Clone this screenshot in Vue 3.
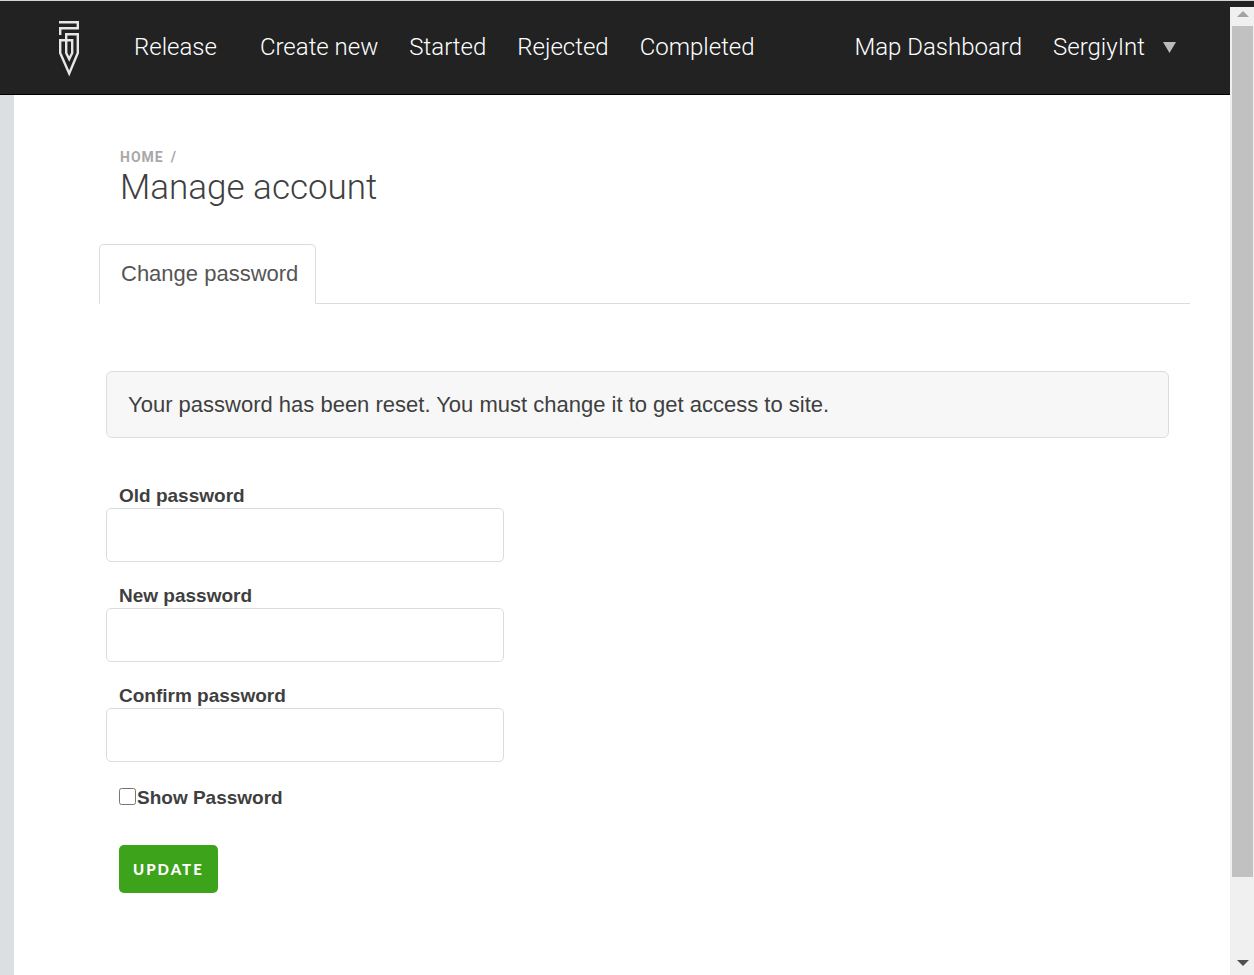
<script setup>
import { ref } from 'vue'

const links = ['Release', 'Create new', 'Started', 'Rejected', 'Completed']
const fields = [
  { id: 'old-password', label: 'Old password' },
  { id: 'new-password', label: 'New password' },
  { id: 'confirm-password', label: 'Confirm password' }
]
const values = ref({})
const show = ref(false)
</script>

<template>
  <div class="page">
    <header class="topbar">
      <a class="logo" href="#" aria-label="Home">
        <svg width="20" height="56" viewBox="0 0 20 56" fill="none" stroke="#e6e6e6" stroke-width="2.4">
          <path d="M0 1.2H18.8V7.2H1.2V14" />
          <path d="M18.8 13.3H7.2V32L10.2 38L13.2 32V19.2H1.2V32L10.2 52.5L18.8 32Z" />
        </svg>
      </a>
      <nav class="links">
        <a v-for="l in links" :key="l" href="#">{{ l }}</a>
      </nav>
      <nav class="account">
        <a href="#">Map Dashboard</a>
        <button type="button" class="user">
          SergiyInt
          <svg width="13" height="11" viewBox="0 0 13 11"><path d="M0 0H13L6.5 11Z" fill="#bbb" /></svg>
        </button>
      </nav>
    </header>

    <main class="content">
      <div class="heading">
        <div class="crumbs"><a href="#">HOME</a><span>/</span></div>
        <h1>Manage account</h1>
      </div>

      <div class="tabs" role="tablist">
        <button type="button" class="tab" role="tab" aria-selected="true">Change password</button>
      </div>

      <div class="panel">
        <p class="notice">Your password has been reset. You must change it to get access to site.</p>

        <form @submit.prevent>
          <div v-for="f in fields" :key="f.id" class="field">
            <label :for="f.id">{{ f.label }}</label>
            <input :id="f.id" v-model="values[f.id]" :type="show ? 'text' : 'password'" />
          </div>
          <div class="show">
            <input id="show-password" v-model="show" type="checkbox" />
            <label for="show-password">Show Password</label>
          </div>
          <button type="submit" class="update">UPDATE</button>
        </form>
      </div>
    </main>

    <div class="scrollbar" aria-hidden="true">
      <svg class="arrow" width="12" height="6" viewBox="0 0 12 6"><path d="M0 6L6 0L12 6Z" fill="#a3a3a3" /></svg>
      <div class="track"><div class="thumb"></div></div>
      <svg class="arrow" width="12" height="6" viewBox="0 0 12 6"><path d="M0 0H12L6 6Z" fill="#505050" /></svg>
    </div>
  </div>
</template>

<style>
body {
  margin: 0;
}
</style>

<style scoped>
* {
  box-sizing: border-box;
}
.page {
  position: relative;
  display: flex;
  flex-direction: column;
  min-height: 100vh;
  background: #fff;
  color: #3f3f3f;
  font-family: "Liberation Sans", Arial, sans-serif;
}
.topbar {
  display: flex;
  align-items: center;
  height: 95px;
  padding: 0 78px 2px 59px;
  background: #222;
  border-top: 1px solid #d2d7d6;
  border-bottom: 1px solid #000;
  font: 300 24px/32px Roboto, sans-serif;
}
.topbar a {
  color: #fff;
  text-decoration: none;
}
.logo {
  display: flex;
  margin-right: 55px;
  padding-top: 4px;
}
.links,
.account {
  display: flex;
  align-items: center;
  gap: 31px;
  white-space: nowrap;
}
.links a:first-child {
  margin-right: 12px;
}
.account {
  margin-left: auto;
}
.user {
  display: flex;
  align-items: center;
  gap: 18px;
  padding: 0;
  border: 0;
  background: none;
  color: #fff;
  font: inherit;
}
.user svg {
  margin-top: 2px;
}
.content {
  flex: 1;
  padding: 54px 64px 40px 85px;
  border-left: 14px solid #dbdfe2;
}
.heading {
  padding-left: 21px;
}
.crumbs {
  display: flex;
  gap: 7px;
  color: #a8a8a8;
  font: 700 14px/16px Roboto, sans-serif;
  letter-spacing: 1px;
}
.crumbs a {
  color: inherit;
  text-decoration: none;
}
h1 {
  margin: 0;
  font: 300 35px/46px Roboto, sans-serif;
}
.tabs {
  display: flex;
  margin-top: 33px;
  border-bottom: 1px solid #dcdcdc;
}
.tab {
  height: 60px;
  margin-bottom: -1px;
  padding: 0 17px 0 21px;
  border: 1px solid #dcdcdc;
  border-bottom-color: #fff;
  border-radius: 5px 5px 0 0;
  background: #fff;
  color: #555;
  font: 22px/28px "Liberation Sans", Arial, sans-serif;
}
.panel {
  padding: 67px 21px 0 7px;
}
.notice {
  margin: 0 0 46px;
  padding: 18px 21px;
  border: 1px solid #dadde0;
  border-radius: 6px;
  background: #f7f7f7;
  font-size: 22px;
  line-height: 29px;
}
.field {
  display: flex;
  flex-direction: column;
  margin-bottom: 22px;
}
label {
  font-size: 19px;
  font-weight: 700;
  line-height: 24px;
}
.field label {
  padding-left: 13px;
}
.field input {
  width: 100%;
  max-width: 398px;
  height: 54px;
  padding: 0 14px;
  border: 1px solid #dadde0;
  border-radius: 5px;
  background: #fff;
  font-size: 22px;
}
.show {
  display: flex;
  align-items: center;
  margin: 24px 0 35px 13px;
}
.show input {
  width: 17px;
  height: 17px;
  margin: 0 1px 3px 0;
}
.update {
  margin-left: 13px;
  height: 48px;
  padding: 0 14px;
  border: 0;
  border-radius: 5px;
  background: #3ca31b;
  color: #fff;
  font: 900 15px/20px Lato, sans-serif;
  letter-spacing: 2px;
}
.scrollbar {
  position: absolute;
  top: 7px;
  right: 0;
  bottom: 0;
  display: flex;
  flex-direction: column;
  align-items: center;
  width: 24px;
  padding: 4px 1px 9px 2px;
  background: #f0f0f0;
}
.track {
  flex: 1;
  width: 100%;
  margin: 9px 0;
}
.arrow {
  flex: none;
}
.thumb {
  height: 92%;
  background: #c1c1c1;
}
</style>
